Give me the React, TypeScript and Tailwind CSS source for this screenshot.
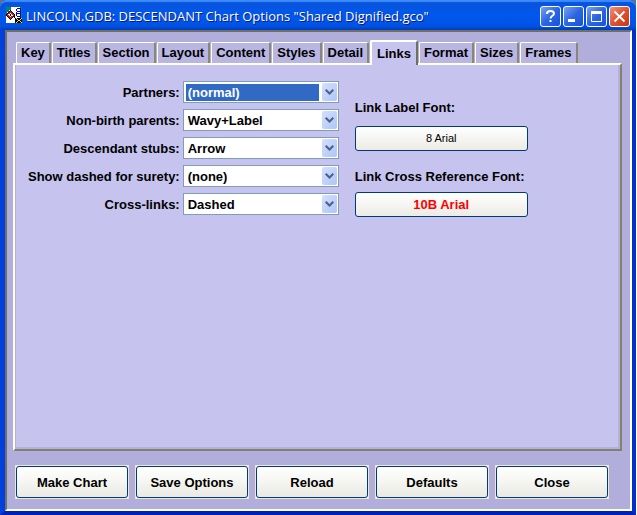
import type { ReactNode } from 'react';

const tabs = ['Key', 'Titles', 'Section', 'Layout', 'Content', 'Styles', 'Detail', 'Links', 'Format', 'Sizes', 'Frames'];

const fields = [
  { id: 'partners', label: 'Partners:', options: ['(normal)', 'Dashed'], active: true },
  { id: 'non-birth', label: 'Non-birth parents:', options: ['Wavy+Label', '(normal)'] },
  { id: 'stubs', label: 'Descendant stubs:', options: ['Arrow', '(none)'] },
  { id: 'surety', label: 'Show dashed for surety:', options: ['(none)', '1', '2', '3'] },
  { id: 'cross-links', label: 'Cross-links:', options: ['Dashed', '(normal)'] },
];

const actions = ['Make Chart', 'Save Options', 'Reload', 'Defaults', 'Close'];

function AppIcon() {
  return (
    <svg width="16" height="16" viewBox="0 0 16 16" shapeRendering="crispEdges" className="shrink-0" aria-hidden="true">
      <rect width="16" height="16" fill="#fff" />
      <path d="M0 0h5v3H3v2H1v2H0z" fill="#008080" />
      <path d="M14 0h2v11h-1V1h-1z" fill="#008080" />
      {/* pedigree sheet */}
      <path d="M11 1h4v1h-4zM10 2h1v2h-1zM14 2h1v9h-1zM11 4h3v1h-3zM10 5h1v4h-1zM11 6h3v1h-3zM11 9h3v1h-3z" fill="#0000e0" />
      {/* diamond */}
      <path d="M4 3h1v1h1v1h1v1h1v1h1v2H8v1H7v1H6v1H5v1H4v-1H3v-1H2v-1H1V9H0V7h1V6h1V5h1V4h1z" fill="#000" />
      <path d="M4 4h1v1h1v1h1v1h1v2H7v1H6v1H5v1H4v-1H3v-1H2V9H1V7h1V6h1V5h1z" fill="#e01010" />
      <path d="M4 6h1v1h1v1h1v1H5v1H4V9H3V8H2V7h2z" fill="#fff" />
      <path d="M4 7h1v2H4z" fill="#000" />
      {/* connector */}
      <path d="M9 11h7v5H9zM8 9h1v2H8z" fill="#000" />
      <path d="M10 11h1v1h1v1h2v-1h1v-1h1v1h-1v1h-1v1h1v1h1v1h-1v-1h-1v-1h-2v1h-1v1h-1v-1h1v-1h1v-1h-1v-1h-1z" fill="#ffee00" />
    </svg>
  );
}

function CaptionButton({ label, close, children }: { label: string; close?: boolean; children: ReactNode }) {
  return (
    <button
      type="button"
      aria-label={label}
      className={
        close
          ? 'flex h-[21px] w-[21px] items-center justify-center rounded-[3px] border border-white bg-linear-to-br from-[#ee9078] via-[#e2502c] to-[#c23a10]'
          : 'flex h-[21px] w-[21px] items-center justify-center rounded-[3px] border border-white bg-linear-to-br from-[#7a9ff2] via-[#2b66e2] to-[#1c50d8]'
      }
    >
      <svg width="19" height="19" viewBox="0 0 19 19" fill="none" stroke="#fff" className="shrink-0" aria-hidden="true">
        {children}
      </svg>
    </button>
  );
}

function TitleBar() {
  return (
    <header className="flex h-[30px] items-center gap-1 rounded-t-md bg-linear-to-b from-[#0a52d6] via-[#0058ee] to-[#0050e0] pr-1.5 pl-1.5 shadow-[inset_0_2px_1px_#3c8cff,inset_0_-2px_2px_#0040c0]">
      <AppIcon />
      <h1 className="flex-1 truncate pt-1 font-['Open_Sans',sans-serif] text-[13px] font-medium text-white [text-shadow:1px_1px_#0a1883]">
        LINCOLN.GDB: DESCENDANT Chart Options "Shared Dignified.gco"
      </h1>
      <div className="flex gap-0.5 pt-0.5">
        <CaptionButton label="Help">
          <path d="M6 7V6.500C6 3 13 3 13 6.500c0 2.500-3.500 2-3.500 5" strokeWidth="2" />
          <path d="M8.500 14h2" strokeWidth="2" />
        </CaptionButton>
        <CaptionButton label="Minimize">
          <path d="M4 13.500h7" strokeWidth="3" />
        </CaptionButton>
        <CaptionButton label="Maximize">
          <path d="M4.500 5v9.500h10V5" />
          <path d="M4 5.500h11" strokeWidth="3" />
        </CaptionButton>
        <CaptionButton label="Close window" close>
          <path d="M4.500 4.500l10 10M14.500 4.500l-10 10" strokeWidth="2" />
        </CaptionButton>
      </div>
    </header>
  );
}

function TabStrip() {
  return (
    <nav role="tablist" className="flex items-end gap-px pl-[3px]">
      {tabs.map((tab) => (
        <button
          key={tab}
          type="button"
          role="tab"
          aria-selected={tab === 'Links'}
          className={
            tab === 'Links'
              ? 'relative -mb-0.5 h-[25px] rounded-t-xs border-t-2 border-r-2 border-l-2 border-t-[#fffff0] border-r-[#716f64] border-l-[#fffff0] bg-[#c6c3ee] px-[5px]'
              : 'h-[21px] rounded-t-xs border-t border-r-2 border-l border-t-[#fffff0] border-r-[#8a8774] border-l-[#fffff0] bg-[#b9b6e3] px-1'
          }
        >
          {tab}
        </button>
      ))}
    </nav>
  );
}

function SelectField({ id, label, options, active }: { id: string; label: string; options: string[]; active?: boolean }) {
  return (
    <>
      <label htmlFor={id} className="pt-0.5 text-right">
        {label}
      </label>
      <div className="flex h-[22px] w-[156px] items-center border border-[#7f9db9] bg-white p-px pl-0.5">
        <select
          id={id}
          className={
            active
              ? 'mr-[3px] h-[17px] min-w-0 flex-1 appearance-none bg-[#316ac5] pt-px pl-0.5 leading-4 text-white outline-none'
              : 'mr-[3px] h-[17px] min-w-0 flex-1 appearance-none bg-white pt-px pl-0.5 leading-4 text-black outline-none'
          }
        >
          {options.map((option) => (
            <option key={option}>{option}</option>
          ))}
        </select>
        <span className="pointer-events-none flex h-[18px] w-[15px] items-center justify-center rounded-xs bg-linear-to-br from-[#d4e0fe] to-[#aec5f8]">
          <svg width="9" height="6" viewBox="0 0 9 6" fill="none" stroke="#4d6185" strokeWidth="2" aria-hidden="true">
            <path d="M0.700 0.700L4.500 4.500L8.300 0.700" />
          </svg>
        </span>
      </div>
    </>
  );
}

export default function App() {
  return (
    <div className="flex min-h-screen flex-col bg-white pr-px font-['Liberation_Sans',Arial,sans-serif] text-[13px] font-bold text-black">
      <div className="flex flex-1 flex-col bg-[#716f64]">
        <div className="flex flex-1 flex-col rounded-t-md bg-[#0045dc]">
          <TitleBar />
          <div className="flex flex-1 flex-col border-r-4 border-b-4 border-l-[5px] border-r-[#0030c8] border-b-[#0020b8] border-l-[#0040dc]">
            <main className="flex flex-1 flex-col border-2 border-t-[#716f64] border-r-[#fffff4] border-b-[#fffff4] border-l-[#716f64] bg-[#b1aedb] pt-2 pr-2 pb-2.5 pl-1.5">
              <TabStrip />
              <section
                role="tabpanel"
                aria-label="Links"
                className="flex flex-1 items-start gap-4 border-t-2 border-r-2 border-b-2 border-l-2 border-t-[#fffff0] border-r-[#838070] border-b-[#838070] border-l-[#fffff0] bg-[#c6c3ee] pt-4 pl-[13px] shadow-[inset_-2px_-2px_#b3b0da,inset_1px_0_#b3b0da]"
              >
                <div className="grid grid-cols-[auto_auto] items-center gap-x-[3px] gap-y-1.5">
                  {fields.map((field) => (
                    <SelectField key={field.id} {...field} />
                  ))}
                </div>
                <div className="flex flex-col pt-[17px]">
                  <label htmlFor="label-font">Link Label Font:</label>
                  <button
                    id="label-font"
                    type="button"
                    className="mt-2 h-[25px] w-[173px] rounded-[3px] border border-[#003c74] bg-linear-to-b from-white to-[#ecebe5] text-[11px] font-normal"
                  >
                    8 Arial
                  </button>
                  <label htmlFor="cross-font" className="mt-4">
                    Link Cross Reference Font:
                  </label>
                  <button
                    id="cross-font"
                    type="button"
                    className="mt-1.5 h-[25px] w-[173px] rounded-[3px] border border-[#003c74] bg-linear-to-b from-white to-[#ecebe5] text-[13px] text-[#ff0000]"
                  >
                    10B Arial
                  </button>
                </div>
              </section>
              <footer className="mt-3.5 flex gap-1.5 pl-0.5">
                {actions.map((action) => (
                  <div key={action} className="h-[34px] w-[114px] border border-[#ece9d8] bg-[#ece9d8]">
                    <button
                      type="button"
                      className="h-full w-full rounded-[3px] border border-[#003c74] bg-linear-to-b from-white via-[#f5f5f1] to-[#eae9e2] pt-0.5"
                    >
                      {action}
                    </button>
                  </div>
                ))}
              </footer>
            </main>
          </div>
        </div>
      </div>
    </div>
  );
}
